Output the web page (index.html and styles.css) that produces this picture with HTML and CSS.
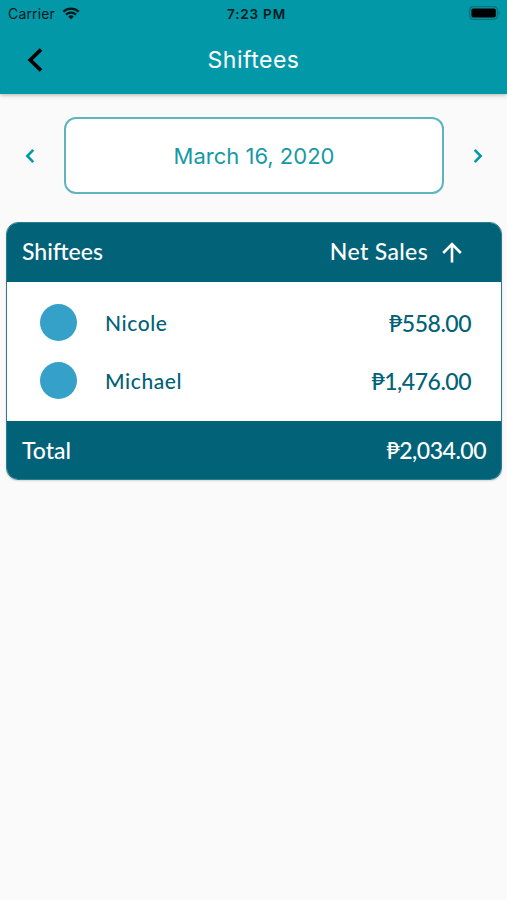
FILE: index.html
```html
<!doctype html>
<html lang="en">
<head>
	<meta charset="UTF-8">
	<meta name="viewport" content="width=device-width, initial-scale=1">
	<title>Shiftees</title>
	<link rel="stylesheet" href="styles.css">
</head>
<body>
	<header class="header">
		<div class="status">
			<div class="carrier">
				<span>Carrier</span>
				<svg class="wifi" width="18" height="13" viewBox="0 0 18 13">
					<path d="M1.3 4.7a11 11 0 0 1 15.4 0M4 7.6a7.2 7.2 0 0 1 10 0" fill="none" stroke="#04191c" stroke-width="2.3"/>
					<path d="M9 12.3L6.2 9.7a4 4 0 0 1 5.6 0z" fill="#04191c"/>
				</svg>
			</div>
			<span class="time">7:23 PM</span>
			<svg class="battery" width="32" height="14" viewBox="0 0 32 14">
				<rect x=".7" y=".7" width="27.6" height="12.6" rx="3.5" fill="none" stroke="#04717c" stroke-width="1.2"/>
				<rect x="2.4" y="2.4" width="24.4" height="9.2" rx="1.8" fill="#000"/>
				<path d="M29.7 4.8c1.7.7 1.7 3.7 0 4.4z" fill="#04717c"/>
			</svg>
		</div>
		<div class="navbar">
			<svg class="back" width="18" height="26" viewBox="0 0 18 26">
				<path d="M15 2.5L4.3 13 15 23.5" fill="none" stroke="#000" stroke-width="3.8"/>
			</svg>
			<h1 class="title">Shiftees</h1>
		</div>
	</header>

	<main>
		<div class="date-row">
			<svg class="arrow" width="12" height="16" viewBox="0 0 12 16">
				<path d="M9.3 1.8L3.3 8l6 6.2" fill="none" stroke="#0499a6" stroke-width="2.6"/>
			</svg>
			<div class="date"><span>March 16, 2020</span></div>
			<svg class="arrow" width="12" height="16" viewBox="0 0 12 16">
				<path d="M2.7 1.8l6 6.2-6 6.2" fill="none" stroke="#0499a6" stroke-width="2.6"/>
			</svg>
		</div>

		<section class="card">
			<div class="card-head">
				<span class="head-name">Shiftees</span>
				<div class="sort">
					<span class="head-sales">Net Sales</span>
					<svg width="20" height="22" viewBox="0 0 20 22">
						<path d="M10 20.5V2.4M1.2 11L10 2.2l8.8 8.8" fill="none" stroke="#fff" stroke-width="2.6"/>
					</svg>
				</div>
			</div>
			<div class="list">
				<div class="item">
					<i class="avatar"></i>
					<span class="name">Nicole</span>
					<span class="amount">₱558.00</span>
				</div>
				<div class="item">
					<i class="avatar"></i>
					<span class="name">Michael</span>
					<span class="amount">₱1,476.00</span>
				</div>
			</div>
			<div class="card-foot">
				<span class="total">Total</span>
				<span class="amount">₱2,034.00</span>
			</div>
		</section>
	</main>
</body>
</html>
```
FILE: styles.css
```css
*{margin:0;padding:0;box-sizing:border-box;}
body{
	min-height:900px;
	background:#fafafa;
	font-family:Inter, "Liberation Sans", sans-serif;
}
svg{display:block;flex:none;}
.header{
	height:94px;
	background:#0298a7;
	box-shadow:0 1px 4px rgba(0,0,0,.3);
}

/* status bar */
.status{
	display:grid;
	grid-template-columns:1fr auto 1fr;
	align-items:center;
	height:27px;
	padding:0 6px 0 8px;
	font-size:14px;
	color:#04191c;
}
.carrier{
	display:flex;
	align-items:center;
	gap:7px;
	letter-spacing:.15px;
}
.time{
	padding-left:4px;
	font-size:13.5px;
	font-weight:600;
	letter-spacing:.8px;
}
.battery{
	justify-self:end;
	margin-bottom:2px;
}

/* nav bar */
.navbar{
	display:grid;
	grid-template-columns:1fr auto 1fr;
	align-items:center;
	height:66px;
	padding-left:26px;
}
.title{
	margin-right:26px;
	font-size:23px;
	font-weight:400;
	letter-spacing:.5px;
	color:#fff;
}

/* date picker */
.date-row{
	display:flex;
	align-items:center;
	justify-content:space-between;
	padding:23px 23px 0 24px;
}
.date{
	display:flex;
	align-items:center;
	justify-content:center;
	width:380px;
	height:77px;
	border:2px solid #5fb5be;
	border-radius:12px;
	background:#fff;
	font-size:22px;
	color:#1699a5;
}

/* sales table */
.card{
	margin:28px 5px 0 6px;
	border:1px solid #2a7e8f;
	border-radius:12px;
	overflow:hidden;
	background:#fff;
	box-shadow:0 1px 2px rgba(0,0,0,.15);
	font-family:Lato, "Liberation Sans", sans-serif;
	font-weight:500;
	color:#026277;
}
.card-head, .card-foot{
	display:flex;
	align-items:center;
	justify-content:space-between;
	background:#026277;
	font-size:23px;
	color:#fff;
}
.card-head{
	height:59px;
	padding:0 39px 0 15px;
}
.head-name, .head-sales{padding-bottom:3px;}
.head-sales{letter-spacing:.35px;}
.card-foot{
	height:58px;
	padding:0 15px;
}
.sort{
	display:flex;
	align-items:center;
	gap:14px;
}
.list{
	display:flex;
	flex-direction:column;
	gap:21px;
	padding:22px 30px 22px 33px;
}
.item{
	display:flex;
	align-items:center;
	height:37px;
	font-size:21px;
}
.avatar{
	width:37px;
	height:37px;
	margin-right:28px;
	border-radius:50%;
	background:#35a1c8;
}
.name{
	padding-bottom:1px;
	letter-spacing:.6px;
}
.amount{
	margin-left:auto;
	font-size:23px;
	letter-spacing:-.5px;
}
```
